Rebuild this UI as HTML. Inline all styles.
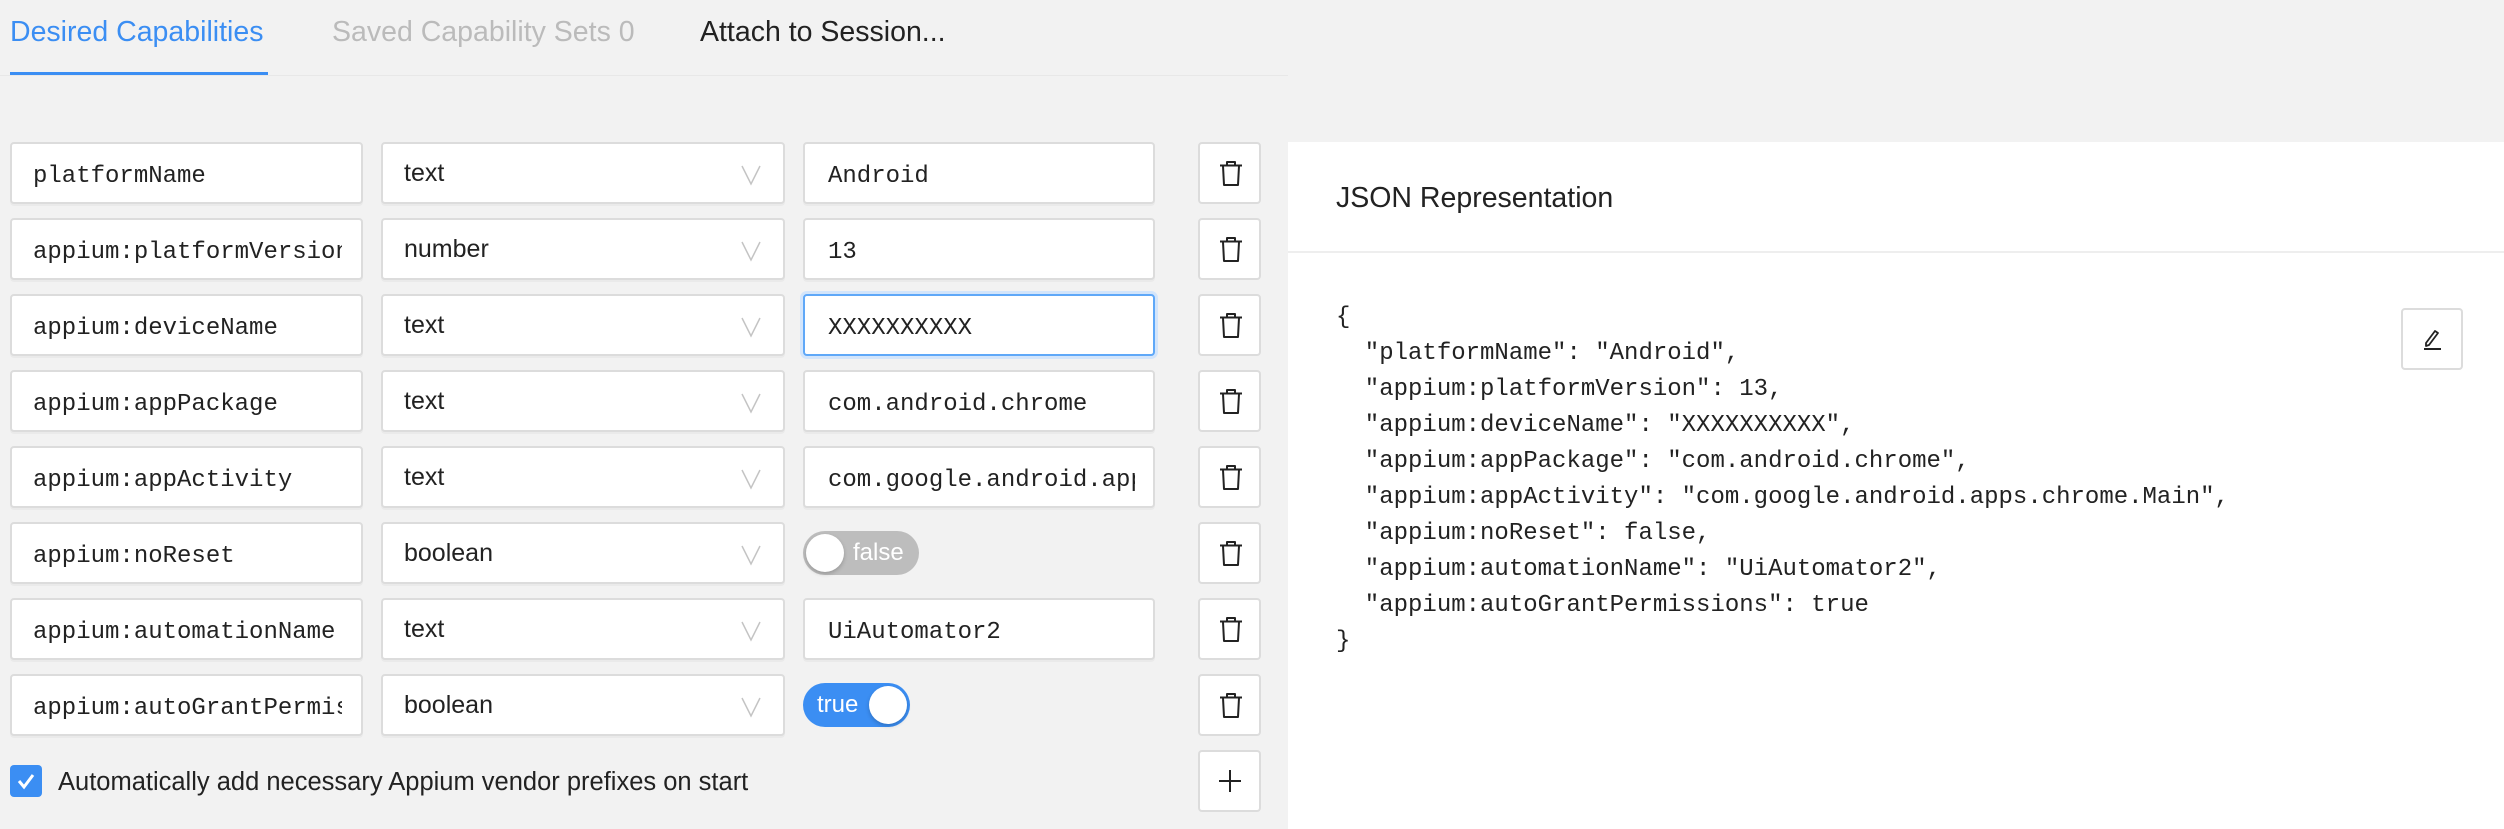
<!DOCTYPE html>
<html><head><meta charset="utf-8"><style>
*{box-sizing:border-box;margin:0;padding:0}
body{width:2504px;height:829px;background:#f2f2f2;position:relative;overflow:hidden;font-family:"Liberation Sans",sans-serif;color:#222}
.abs{position:absolute}
.tab{position:absolute;top:14px;font-size:28.5px;line-height:36px}
.box{position:absolute;height:62px;background:#fff;border:2px solid #dcdcdc;border-radius:4px;box-shadow:0 2px 0 rgba(0,0,0,0.03)}
.mono{font-family:"Liberation Mono",monospace;font-size:24px;line-height:58px;padding-top:4px;padding-left:21px;white-space:nowrap;overflow:hidden;color:#222}
.sel{font-size:25px;line-height:58px;padding-left:21px;color:#222}
.chev{position:absolute;right:22px;top:20px}
.del{position:absolute;left:1198px;width:63px;height:62px;background:#fff;border:2px solid #dcdcdc;border-radius:4px}
.del svg{position:absolute;left:18px;top:16px}
</style></head><body>
<div class="tab" style="left:10px;color:#3b8ef3">Desired Capabilities</div>
<div class="tab" style="left:332px;color:#bbb">Saved Capability Sets 0</div>
<div class="tab" style="left:700px;color:#222">Attach to Session...</div>
<div class="abs" style="left:10px;top:72px;width:258px;height:4px;background:#3b8ef3"></div>
<div class="abs" style="left:0;top:75px;width:1288px;height:1px;background:#e8e8e8"></div>

<div id="rows"></div>

<div class="abs" style="left:1288px;top:142px;width:1216px;height:687px;background:#fff"></div>
<div class="abs" style="left:1288px;top:251px;width:1216px;height:2px;background:#eee"></div>
<div class="abs" style="left:1336px;top:181px;font-size:28.5px;line-height:34px;color:#222">JSON Representation</div>
<pre class="abs" style="left:1336px;top:300px;font-family:'Liberation Mono',monospace;font-size:24px;line-height:36px;color:#222">{
  "platformName": "Android",
  "appium:platformVersion": 13,
  "appium:deviceName": "XXXXXXXXXX",
  "appium:appPackage": "com.android.chrome",
  "appium:appActivity": "com.google.android.apps.chrome.Main",
  "appium:noReset": false,
  "appium:automationName": "UiAutomator2",
  "appium:autoGrantPermissions": true
}</pre>
<div class="abs" style="left:2401px;top:308px;width:62px;height:62px;border:2px solid #dcdcdc;border-radius:4px;background:#fff">
<svg class="abs" style="left:17px;top:16px" width="26" height="26" viewBox="0 0 26 26"><path d="M6 17 L15 5 L18 7 L9 19 L6 20 Z" fill="none" stroke="#222" stroke-width="1.8" stroke-linejoin="round"/><path d="M4 23 H21" stroke="#222" stroke-width="2"/></svg></div>

<div class="abs" style="left:10px;top:765px;width:32px;height:32px;background:#3b8ef3;border-radius:4px">
<svg width="32" height="32" viewBox="0 0 32 32"><path d="M9 16 L14 22 L23 10" fill="none" stroke="#fff" stroke-width="3"/></svg></div>
<div class="abs" style="left:58px;top:766px;font-size:25.5px;line-height:32px;color:#222">Automatically add necessary Appium vendor prefixes on start</div>
<div class="abs" style="left:1198px;top:750px;width:63px;height:62px;background:#fff;border:2px solid #dcdcdc;border-radius:4px">
<svg class="abs" style="left:17px;top:16px" width="26" height="26" viewBox="0 0 26 26"><path d="M13 2V24M2 13H24" stroke="#222" stroke-width="2"/></svg></div>

<script>
const rows=[["platformName","text","Android"],["appium:platformVersion","number","13"],["appium:deviceName","text","XXXXXXXXXX",1],["appium:appPackage","text","com.android.chrome"],["appium:appActivity","text","com.google.android.apps.chrome.Main"],["appium:noReset","boolean","F"],["appium:automationName","text","UiAutomator2"],["appium:autoGrantPermissions","boolean","T"]];
let h="";
rows.forEach((r,i)=>{const t=142+i*76;
h+=`<div class="box" style="left:10px;top:${t}px;width:353px"><div class="mono" style="position:absolute;left:0;top:0;width:330px;height:58px">${r[0]}</div></div>`;
h+=`<div class="box sel" style="left:381px;top:${t}px;width:404px">${r[1]}<svg class="chev" width="20" height="22" viewBox="0 0 20 22"><path d="M1 2 L10 20 L19 2" fill="none" stroke="#c4c4c4" stroke-width="1.5"/></svg></div>`;
if(r[2]=="F"){h+=`<div class="abs" style="left:803px;top:${t+9}px;width:116px;height:44px;border-radius:22px;background:#bdbdbd"><div class="abs" style="left:3px;top:3px;width:38px;height:38px;border-radius:50%;background:#fff;box-shadow:0 2px 4px rgba(0,0,0,.2)"></div><div class="abs" style="left:50px;top:0;line-height:44px;font-size:24px;color:#fff">false</div></div>`}
else if(r[2]=="T"){h+=`<div class="abs" style="left:803px;top:${t+9}px;width:107px;height:44px;border-radius:22px;background:#3b8ef3"><div class="abs" style="right:3px;top:3px;width:38px;height:38px;border-radius:50%;background:#fff;box-shadow:0 2px 4px rgba(0,0,0,.2)"></div><div class="abs" style="left:14px;top:0;line-height:44px;font-size:24px;color:#fff">true</div></div>`}
else{const f=r[3]?"border-color:#5fa8f8;box-shadow:0 0 0 3px #d3e5fb;":"";h+=`<div class="box" style="left:803px;top:${t}px;width:352px;${f}"><div class="mono" style="position:absolute;left:0;top:0;width:330px;height:58px;padding-left:23px">${r[2]}</div></div>`}
h+=`<div class="del" style="top:${t}px"><svg width="26" height="28" viewBox="0 0 26 28"><path d="M2 5.5H24M9 5V2H17V5M5 6L6 25H20L21 6" fill="none" stroke="#222" stroke-width="2" stroke-linejoin="round"/></svg></div>`;
});
document.getElementById("rows").outerHTML=h;
</script>
</body></html>
